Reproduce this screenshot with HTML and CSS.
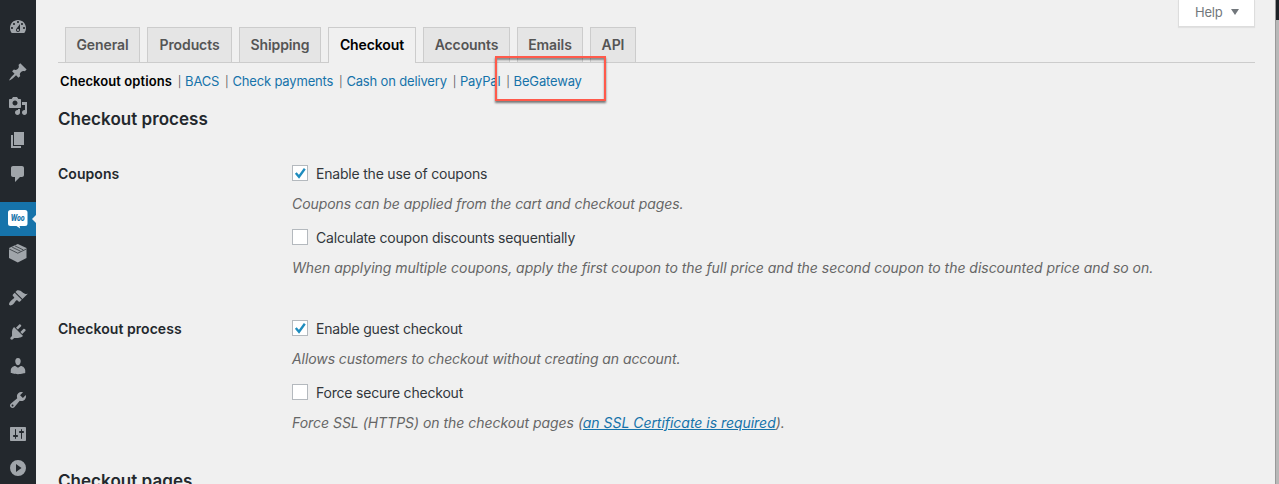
FILE: index.html
```html
<!DOCTYPE html>
<html lang="en">
<head>
<meta charset="utf-8">
<title>Checkout settings</title>
<link rel="stylesheet" href="styles.css">
</head>
<body>
<div class="app">
  <nav class="menu">
    <a class="item"><svg viewBox="0 0 20 20"><path fill-rule="evenodd" d="M3.76 16h12.48c1.1-1.37 1.76-3.11 1.76-5 0-4.42-3.58-8-8-8s-8 3.58-8 8c0 1.89.66 3.63 1.76 5zM10 4c.55 0 1 .45 1 1s-.45 1-1 1-1-.45-1-1 .45-1 1-1zM6 6c.55 0 1 .45 1 1s-.45 1-1 1-1-.45-1-1 .45-1 1-1zm8 0c.55 0 1 .45 1 1s-.45 1-1 1-1-.45-1-1 .45-1 1-1zm-5.370 5.550L12 7v6c0 1.100-.9 2-2 2s-2-.9-2-2c0-.57.24-1.080.63-1.450zM4 10c.55 0 1 .45 1 1s-.45 1-1 1-1-.45-1-1 .45-1 1-1zm12 0c.55 0 1 .45 1 1s-.45 1-1 1-1-.45-1-1 .45-1 1-1zm-5 3c0-.55-.45-1-1-1s-1 .45-1 1 .45 1 1 1 1-.45 1-1z"/></svg></a>
    <a class="item gap"><svg viewBox="0 0 20 20"><path d="M10.44 3.02l1.82-1.82 6.36 6.35-1.83 1.82c-1.05-.68-2.48-.57-3.41.36l-.75.75c-.92.93-1.04 2.35-.35 3.41l-1.83 1.82-2.41-2.41-2.8 2.79c-.42.42-3.38 2.71-3.8 2.29s1.86-3.39 2.28-3.81l2.79-2.79L4.1 9.36l1.83-1.82c1.05.69 2.48.57 3.4-.36l.75-.75c.93-.92 1.05-2.35.36-3.41z"/></svg></a>
    <a class="item"><svg viewBox="0 0 20 20"><path fill-rule="evenodd" d="M13 11V4c0-.55-.45-1-1-1h-1.67L9 1H5L3.67 3H2c-.55 0-1 .45-1 1v7c0 .55.45 1 1 1h10c.55 0 1-.45 1-1zM7 4.5c1.38 0 2.5 1.12 2.5 2.5S8.38 9.5 7 9.5 4.5 8.38 4.5 7 5.62 4.5 7 4.5zM14 6h5v10.5c0 1.38-1.12 2.5-2.5 2.5S14 17.88 14 16.5s1.12-2.5 2.5-2.5c.17 0 .34.02.5.05V9h-3V6zm-4 8.05V13h2v3.5c0 1.38-1.12 2.5-2.5 2.5S7 17.88 7 16.5 8.12 14 9.5 14c.17 0 .34.02.5.05z"/></svg></a>
    <a class="item"><svg viewBox="0 0 20 20"><path d="M6 15V2h10v13H6zm-1 1h8v2H3V5h2v11z"/></svg></a>
    <a class="item"><svg viewBox="0 0 20 20"><path d="M5 2h9c1.1 0 2 .9 2 2v7c0 1.1-.9 2-2 2h-2l-5 5v-5H5c-1.1 0-2-.9-2-2V4c0-1.1.9-2 2-2z"/></svg></a>
    <a class="item gap current"><svg viewBox="0 0 20 20"><path d="M2.5 1h14.500a2.500 2.500 0 0 1 2.500 2.500v11a2.500 2.500 0 0 1-2.500 2.500h-5.500l.7 2.500-3.700-2.500h-6a2.500 2.500 0 0 1-2.500-2.500v-11a2.500 2.500 0 0 1 2.500-2.500z"/><text class="woo" x="9.700" y="11.800" text-anchor="middle" textLength="14" lengthAdjust="spacingAndGlyphs">Woo</text></svg></a>
    <a class="item"><svg viewBox="0 0 20 20"><path d="M9.800 1l8.700 4v10l-8.700 4.500L1 15V5z"/><path class="seam" d="M1.200 6l8.600 4.200 8.600-4.200M4.200 4.200l8.300 4M7 2.900l8.300 4"/></svg></a>
    <a class="item gap"><svg viewBox="0 0 20 20"><path d="M14.480 11.060L7.410 3.990l1.500-1.500c.5-.56 2.300-.47 3.510.32 1.210.8 1.430 1.280 2.910 2.100 1.180.64 2.450 1.260 4.450.85zm-.71.71L6.700 4.700 4.930 6.470c-.39.39-.39 1.020 0 1.410l1.060 1.060c.39.39.39 1.030 0 1.420-.6.6-1.430 1.110-2.210 1.690-.35.26-.7.53-1.010.84C1.430 14.230.4 16.080 1.400 17.070c.99 1 2.840-.03 4.180-1.360.31-.31.58-.66.85-1.020.57-.78 1.080-1.610 1.690-2.210.39-.39 1.020-.39 1.410 0l1.060 1.060c.39.39 1.020.39 1.410 0z"/></svg></a>
    <a class="item"><svg viewBox="0 0 20 20"><path d="M13.110 4.360L9.870 7.600 8 5.730l3.240-3.240c.35-.34 1.050-.2 1.560.32.52.51.66 1.210.31 1.550zm-8 1.770l.91-1.120 9.010 9.010-1.190.84c-.71.71-2.630 1.160-3.820 1.160H6.140L4.900 17.260c-.59.59-1.540.59-2.120 0-.59-.58-.59-1.530 0-2.120l1.240-1.240v-3.880c0-1.130.4-3.190 1.090-3.890zm7.260 3.970l3.240-3.240c.34-.35 1.040-.21 1.550.31.52.51.66 1.210.31 1.550l-3.240 3.250z"/></svg></a>
    <a class="item"><svg viewBox="0 0 20 20"><path d="M10 9.250c-2.270 0-2.730-3.440-2.730-3.440C7 4.020 7.820 2 9.970 2c2.160 0 2.980 2.020 2.710 3.810 0 0-.41 3.440-2.680 3.440zm0 2.570L12.720 10c2.390 0 4.520 2.330 4.520 4.530v2.490s-3.650 1.130-7.240 1.130c-3.650 0-7.240-1.130-7.240-1.130v-2.490c0-2.250 1.940-4.480 4.470-4.480z"/></svg></a>
    <a class="item"><svg viewBox="0 0 20 20"><path fill-rule="evenodd" d="M16.680 9.770c-1.340 1.340-3.300 1.670-4.950.99l-5.410 6.520c-.99.99-2.590.99-3.580 0s-.99-2.590 0-3.570l6.520-5.420c-.68-1.650-.35-3.610.99-4.950 1.280-1.280 3.120-1.620 4.720-1.060l-2.890 2.890 2.820 2.820 2.860-2.870c.53 1.580.18 3.390-1.080 4.650zM3.810 16.210c.4.39 1.040.39 1.430 0 .4-.4.4-1.040 0-1.430-.39-.4-1.030-.4-1.430 0-.39.39-.39 1.030 0 1.430z"/></svg></a>
    <a class="item"><svg viewBox="0 0 20 20"><path fill-rule="evenodd" d="M18 16V4c0-.55-.45-1-1-1H3c-.55 0-1 .45-1 1v12c0 .55.45 1 1 1h14c.55 0 1-.45 1-1zM8 11h1c.55 0 1 .45 1 1s-.45 1-1 1H8v1.500c0 .28-.22.5-.5.5s-.5-.22-.5-.5V13H6c-.55 0-1-.45-1-1s.45-1 1-1h1V5.500c0-.28.22-.5.5-.5s.5.22.5.5V11zm5-2h-1c-.55 0-1-.45-1-1s.45-1 1-1h1V5.500c0-.28.22-.5.5-.5s.5.22.5.5V7h1c.55 0 1 .45 1 1s-.45 1-1 1h-1v5.500c0 .28-.22.5-.5.5s-.5-.22-.5-.5V9z"/></svg></a>
    <a class="item"><svg viewBox="0 0 20 20"><path fill-rule="evenodd" d="M10 2a8 8 0 1 1 0 16 8 8 0 0 1 0-16zM8 6v8l5.500-4z"/></svg></a>
  </nav>
  <main class="content">
    <div class="help">Help <svg class="caret" viewBox="0 0 8 6"><path d="M0 0h8L4 6z"/></svg></div>
    <div class="tabs">
      <a class="tab t-general">General</a><a class="tab t-products">Products</a><a class="tab t-shipping">Shipping</a><a class="tab t-checkout active">Checkout</a><a class="tab t-accounts">Accounts</a><a class="tab t-emails">Emails</a><a class="tab t-api">API</a>
    </div>
    <div class="sections">
      <a class="chosen">Checkout options</a><i>|</i><a>BACS</a><i>|</i><a>Check payments</a><i>|</i><a>Cash on delivery</a><i>|</i><a>PayPal</a><i>|</i><a>BeGateway<span class="marker"></span></a>
    </div>
    <h2>Checkout process</h2>
    <div class="row">
      <div class="name">Coupons</div>
      <div class="fields">
        <label class="check"><span class="box"><svg viewBox="0 0 14 14"><path d="M2.800 7l3.200 3.800L11.800 2.800"/></svg></span><span>Enable the use of coupons</span></label>
        <p class="tight">Coupons can be applied from the cart and checkout pages.</p>
        <label class="check"><span class="box"></span><span>Calculate coupon discounts sequentially</span></label>
        <p>When applying multiple coupons, apply the first coupon to the full price and the second coupon to the discounted price and so on.</p>
      </div>
    </div>
    <div class="row">
      <div class="name">Checkout process</div>
      <div class="fields">
        <label class="check"><span class="box"><svg viewBox="0 0 14 14"><path d="M2.800 7l3.200 3.800L11.800 2.800"/></svg></span><span>Enable guest checkout</span></label>
        <p class="tight">Allows customers to checkout without creating an account.</p>
        <label class="check"><span class="box"></span><span>Force secure checkout</span></label>
        <p>Force SSL (HTTPS) on the checkout pages (<a>an SSL Certificate is required</a>).</p>
      </div>
    </div>
    <h2 class="pages">Checkout pages</h2>
  </main>
  <div class="edge"></div>
</div>
</body>
</html>
```
FILE: styles.css
```css
* { box-sizing: border-box; }
body { margin: 0; background: #f0f0f0; color: #444; font: 14px/20px Inter, sans-serif; }
.app { display: flex; height: 484px; overflow: hidden; }

.menu { flex: none; width: 36px; height: 484px; padding-top: 10px; background: #23282d; overflow: hidden; }
.item { display: flex; height: 34px; padding: 7px 0 0 8px; }
.item svg { width: 20px; height: 20px; fill: #a0a5aa; }
.item.gap { margin-top: 11px; }
.item.current { position: relative; background: #1673aa; }
.item.current svg { fill: #fff; }
.item.current::after { content: ""; position: absolute; right: 0; top: 13px; border: 4px solid transparent; border-left: 0; border-right-color: #f0f0f0; }
.item .woo { fill: #1673aa; font: italic 800 8.500px Inter, sans-serif; }
.item .seam { fill: none; stroke: #23282d; stroke-width: .7; }

.content { position: relative; flex: 1; padding: 27px 20px 0 22px; }
.help { position: absolute; right: 20px; top: 0; display: flex; align-items: center; gap: 8px; width: 77px; height: 27px; padding: 0 0 2px 16px; border: 1px solid #ddd; border-top: 0; background: #fff; color: #72777c; font-size: 13px; letter-spacing: -.2px; box-shadow: 0 1px 1px rgba(0,0,0,.06); }
.caret { width: 8px; height: 6px; fill: #72777c; }
.edge { flex: none; width: 4px; border-left: 1px solid #999; background: linear-gradient(#1d2126 20px, #b8b8b8 20px); }

.tabs { display: flex; gap: 7px; height: 36px; padding-left: 7px; border-bottom: 1px solid #ccc; }
.tab { height: 35px; padding: 4px 0 0; border: 1px solid #ccc; border-bottom: 0; background: #e5e5e5; color: #555; font-weight: 600; line-height: 25px; text-align: center; white-space: nowrap; letter-spacing: -.1px; }
.tab.active { height: 36px; background: #f0f0f0; color: #000; }
.t-general { width: 75px; }
.t-products { width: 85px; }
.t-shipping { width: 82px; }
.t-checkout { width: 88px; }
.t-accounts { width: 87px; }
.t-emails { width: 66px; }
.t-api { width: 46px; }

.sections { display: flex; height: 20px; margin: 8px 0 0 2px; color: #666; font-size: 13px; letter-spacing: -.16px; white-space: nowrap; }
.sections a { position: relative; color: #1673aa; }
.sections .chosen { color: #000; font-weight: 600; letter-spacing: .08px; }
.sections i { width: 13.100px; padding: 1px 0 0 5.800px; font-size: 11px; font-style: normal; }
.marker { position: absolute; left: -19px; top: -15px; width: 111px; height: 45px; border: 2px solid #ff5a4b; box-shadow: 0 2px 2px rgba(0,0,0,.5), inset 0 2px 2px rgba(0,0,0,.4); }

h2 { margin: 18px 0 0; color: #23282d; font-size: 17px; font-weight: 600; line-height: 20px; letter-spacing: .04px; }
.row { display: flex; height: 120px; margin-top: 35px; color: #23282d; }
.name { width: 234px; font-weight: 600; letter-spacing: .05px; }
.fields { color: #444; white-space: nowrap; }
.check { display: flex; height: 20px; color: #32373c; letter-spacing: -.2px; }
.box { width: 16px; height: 16px; margin: 1px 8px 0 0; border: 1px solid #b4b9be; background: #fff; }
.box svg { display: block; width: 14px; height: 14px; fill: none; stroke: #1e8cbe; stroke-width: 2.300; }
.fields p { margin: 10px 0 14px; color: #666; font-style: italic; letter-spacing: -.03px; }
.fields p.tight { letter-spacing: -.08px; }
.fields p a { color: #1673aa; text-decoration: underline; }
h2.pages { margin-top: 32px; }
```
